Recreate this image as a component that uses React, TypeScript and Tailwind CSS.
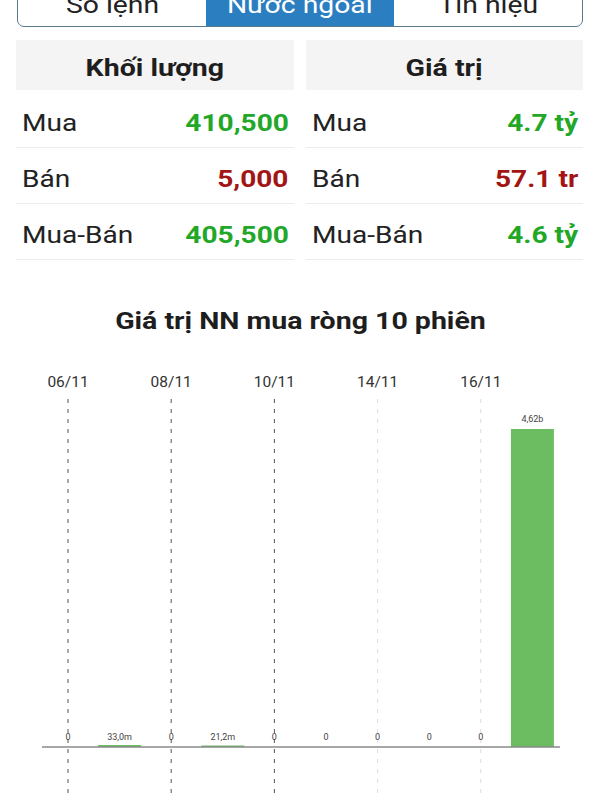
import React from "react";

const font = { fontFamily: "Roboto, 'Noto Sans', sans-serif" };

const tabs = ["Sổ lệnh", "Nước ngoài", "Tín hiệu"];

type Row = { label: string; value: string; tone: "up" | "down" };

const volumeRows: Row[] = [
  { label: "Mua", value: "410,500", tone: "up" },
  { label: "Bán", value: "5,000", tone: "down" },
  { label: "Mua-Bán", value: "405,500", tone: "up" },
];

const valueRows: Row[] = [
  { label: "Mua", value: "4.7 tỷ", tone: "up" },
  { label: "Bán", value: "57.1 tr", tone: "down" },
  { label: "Mua-Bán", value: "4.6 tỷ", tone: "up" },
];

// the source screenshot is a bit stretched sideways, so text gets a scale-x
const Column = ({ title, rows }: { title: string; rows: Row[] }) => (
  <div className="flex flex-col">
    <div className="h-[50px] pt-[8px] bg-[#f4f4f4] flex items-center justify-center text-[23px] font-bold text-[#1e1e1e]">
      <span className="inline-block scale-x-[1.24]">{title}</span>
    </div>
    <div className="mt-[2px] flex flex-col">
      {rows.map((r) => (
        <div
          key={r.label}
          className="h-[56px] pt-[9px] border-b border-[#ececec] flex items-center justify-between pl-[6px] pr-[5px] text-[23px]"
        >
          <span className="inline-block origin-left scale-x-[1.22] text-[#222]">{r.label}</span>
          <span
            className={
              r.tone === "up"
                ? "inline-block origin-right scale-x-[1.22] font-bold text-[#22a728]"
                : "inline-block origin-right scale-x-[1.22] font-bold text-[#a31414]"
            }
          >
            {r.value}
          </span>
        </div>
      ))}
    </div>
  </div>
);

const sessions = [
  { v: "0", h: 0 },
  { v: "33,0m", h: 2 },
  { v: "0", h: 0 },
  { v: "21,2m", h: 1.5 },
  { v: "0", h: 0 },
  { v: "0", h: 0 },
  { v: "0", h: 0 },
  { v: "0", h: 0 },
  { v: "0", h: 0 },
  { v: "4,62b", h: 318 },
];

const dates = [
  { d: "06/11", i: 0, dark: true },
  { d: "08/11", i: 2, dark: true },
  { d: "10/11", i: 4, dark: true },
  { d: "14/11", i: 6, dark: false },
  { d: "16/11", i: 8, dark: false },
];

const Chart = () => {
  const axisY = 388;
  const cx = (i: number) => 68 + 51.6 * i;
  return (
    <svg width="600" height="440" viewBox="0 0 600 440" className="block">
      {dates.map((d) => (
        <g key={d.d}>
          <text
            x={cx(d.i)}
            y={28}
            textAnchor="middle"
            fontSize="15.5"
            fill="#333"
            style={font}
          >
            {d.d}
          </text>
          <line
            x1={cx(d.i)}
            x2={cx(d.i)}
            y1={40}
            y2={436}
            stroke={d.dark ? "#555" : "#dcdcdc"}
            strokeWidth="1"
            strokeDasharray="4 6"
          />
        </g>
      ))}
      {sessions.map((s, i) => (
        <g key={i}>
          {s.h > 0 && (
            <rect
              x={cx(i) - 21.5}
              y={axisY - s.h}
              width="43"
              height={s.h}
              fill="#6cbd62"
            />
          )}
          <text
            x={cx(i)}
            y={s.h > 100 ? axisY - s.h - 7 : axisY - 7}
            textAnchor="middle"
            fontSize="9"
            fill="#444"
            style={font}
          >
            {s.v}
          </text>
        </g>
      ))}
      <line x1="42" x2="560" y1={axisY} y2={axisY} stroke="#8a8a8a" strokeWidth="1.5" />
    </svg>
  );
};

export default function App() {
  return (
    <div className="w-[600px] h-[800px] overflow-hidden bg-white" style={font}>
      <div className="mx-[17px] -mt-[18px] h-[45px] flex border-[1.5px] border-[#5b7b8c] rounded-b-[7px] overflow-hidden text-[24px]">
        {tabs.map((t, i) => (
          <div
            key={t}
            className={
              i === 1
                ? "flex-1 flex items-center justify-center bg-[#2b7ec0] text-white"
                : "flex-1 flex items-center justify-center text-[#222]"
            }
          >
            <span className="inline-block scale-x-[1.18]">{t}</span>
          </div>
        ))}
      </div>

      <div className="mt-[13px] pl-[16px] pr-[17px] grid grid-cols-2 gap-x-[12px]">
        <Column title="Khối lượng" rows={volumeRows} />
        <Column title="Giá trị" rows={valueRows} />
      </div>

      <div className="mt-[47px] h-[30px] flex items-center justify-center text-[23px] font-bold text-[#1e1e1e]">
        <span className="inline-block scale-x-[1.24]">Giá trị NN mua ròng 10 phiên</span>
      </div>

      <div className="mt-[22px]">
        <Chart />
      </div>
    </div>
  );
}
